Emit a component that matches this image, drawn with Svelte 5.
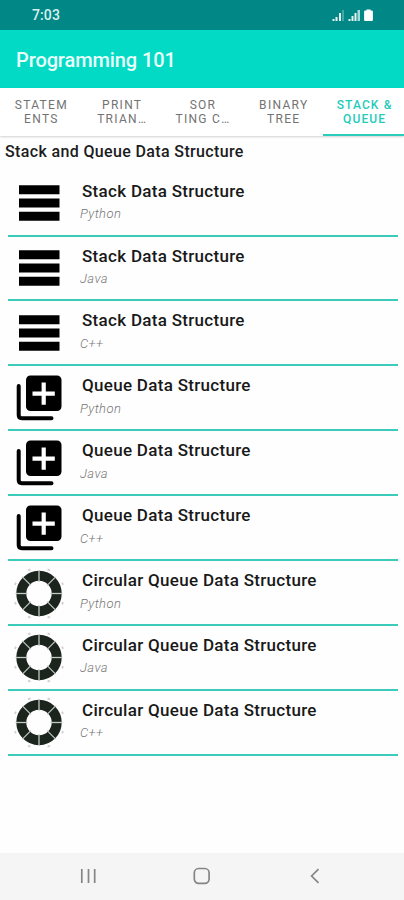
<script lang="ts">
  const tabs = [
    ['STATEM', 'ENTS'],
    ['PRINT', 'TRIAN…'],
    ['SOR', 'TING C…'],
    ['BINARY', 'TREE'],
    ['STACK &', 'QUEUE'],
  ];
  let active = $state(4);

  const languages = ['Python', 'Java', 'C++'];
  const topics = [
    { icon: 'stack', title: 'Stack Data Structure' },
    { icon: 'queue', title: 'Queue Data Structure' },
    { icon: 'circular', title: 'Circular Queue Data Structure' },
  ];
  const items = topics.flatMap((topic) =>
    languages.map((language) => ({ ...topic, language }))
  );

  const spokes = [0, 45, 90, 135, 180, 225, 270, 315];
</script>

<div class="screen">
  <div class="status">
    <span class="time">7:03</span>
    <svg class="indicators" width="42" height="14" viewBox="0 0 42 14">
      <g fill="#e4f5f3">
        <rect x="0.500" y="11" width="2" height="2" />
        <rect x="3.500" y="9" width="2" height="4" />
        <rect x="7" y="5" width="2" height="8" />
        <rect x="10" y="2" width="2" height="11" opacity=".3" />
        <rect x="16.500" y="11" width="2" height="2" />
        <rect x="19.500" y="8" width="2" height="5" />
        <rect x="22.500" y="5" width="2" height="8" />
        <rect x="25.500" y="2" width="2.500" height="11" opacity=".75" />
      </g>
      <path d="M34.500 2.500V1.500h4v1h1.200q1.200 0 1.200 1v8.500q0 1-1 1h-6.800q-1 0-1-1v-8.500q0-1 1.200-1z" fill="#fff" />
    </svg>
  </div>

  <header class="toolbar">Programming 101</header>

  <nav class="tabs">
    {#each tabs as [first, second], i}
      <button class="tab" class:active={i === active} onclick={() => (active = i)}>
        <span>{first}</span>
        <span>{second}</span>
      </button>
    {/each}
  </nav>

  <main>
    <h1>Stack and Queue Data Structure</h1>

    <ul>
      {#each items as item}
        <li>
          <svg class="icon" width="54" height="54" viewBox="0 0 54 54">
            {#if item.icon === 'stack'}
              <path d="M7 9.200h40.500v9H7zM7 22.500h40.500v9H7zM7 35.800h40.500v9H7z" />
            {:else if item.icon === 'queue'}
              <rect x="14" y="4.500" width="35.500" height="35.500" rx="4.500" />
              <path d="M6.700 15v29q0 3.200 3.200 3.200H39.500" fill="none" stroke="#000" stroke-width="4" stroke-linecap="round" />
              <path d="M31.700 11.500v22.300M20.500 22.700h22.300" stroke="#fff" stroke-width="4.200" />
            {:else}
              <circle cx="27" cy="27.500" r="17.700" fill="none" stroke="#1c241e" stroke-width="10" />
              {#each spokes as angle}
                <g transform="rotate({angle} 27 27.5)">
                  <path d="M27 4v12" stroke="#c3c8c3" stroke-width="1.300" />
                  <path d="M25.700 2h2.600" transform="rotate(22.5 27 27.5)" stroke="#cfcfcf" stroke-width="1.800" />
                </g>
              {/each}
            {/if}
          </svg>
          <div class="label">
            <div class="title">{item.title}</div>
            <div class="language">{item.language}</div>
          </div>
        </li>
      {/each}
    </ul>
  </main>

  <footer class="navbar">
    <svg width="18" height="18" viewBox="0 0 18 18">
      <path d="M2.800 2v14M9.500 2v14M15.700 2v14" />
    </svg>
    <svg width="18" height="18" viewBox="0 0 18 18">
      <rect x="1.300" y="1.500" width="14.800" height="14.800" rx="4.300" />
    </svg>
    <svg width="18" height="18" viewBox="0 0 18 18">
      <path d="M12.500 2.200L5.600 9l6.900 6.800" />
    </svg>
  </footer>
</div>

<style>
  :global(body) {
    margin: 0;
  }

  .screen {
    display: flex;
    flex-direction: column;
    height: 900px;
    background-color: #fefefe;
    font-family: Roboto, sans-serif;
    overflow: hidden;
  }

  .status {
    display: flex;
    align-items: center;
    justify-content: space-between;
    box-sizing: border-box;
    height: 30px;
    padding: 0 30px 0 32px;
    background-color: #018786;
    color: #d9f0ee;
  }

  .time {
    font-size: 14px;
    font-weight: 500;
    letter-spacing: 0.1px;
  }

  .toolbar {
    flex: none;
    height: 58px;
    padding-left: 16px;
    background-color: #03dac5;
    color: #e9fffa;
    font-size: 20px;
    font-weight: 500;
    letter-spacing: -0.1px;
    line-height: 60px;
  }

  .tabs {
    flex: none;
    display: flex;
    height: 47.500px;
    background-color: #fff;
    box-shadow: 0 1px 2px rgba(0, 0, 0, 0.18);
  }

  .tab {
    flex: 1 1 0;
    min-width: 0;
    display: flex;
    flex-direction: column;
    align-items: center;
    padding: 10px 0 0 2px;
    border: 0;
    border-bottom: 2px solid transparent;
    background: none;
    color: #737373;
    font-family: inherit;
    font-size: 12px;
    letter-spacing: 1.300px;
    line-height: 14px;
    white-space: nowrap;
  }

  .active {
    border-bottom-color: #2bcdbd;
    color: #1fcbbb;
    font-weight: 500;
    letter-spacing: 1.100px;
  }

  main {
    flex: 1;
  }

  h1 {
    margin: 0;
    padding: 5px 0 0 5px;
    color: #1c1c1c;
    font-size: 16px;
    font-weight: 500;
    letter-spacing: 0.360px;
    line-height: 21px;
  }

  ul {
    margin: 10.200px 6px 0 8px;
    padding: 0;
    list-style: none;
  }

  li {
    display: flex;
    box-sizing: border-box;
    height: 64.900px;
    border-bottom: 2px solid #3bcbbb;
  }

  .icon {
    flex: none;
    margin: 4.500px 0 0 3.500px;
  }

  .label {
    padding: 9px 0 0 14.500px;
  }

  .title {
    padding-left: 2px;
    color: #191919;
    font-size: 17px;
    font-weight: 500;
    letter-spacing: 0.3px;
    line-height: 20px;
  }

  .language {
    padding-top: 4.500px;
    color: #777;
    font-size: 13px;
    font-style: italic;
    font-weight: 300;
    letter-spacing: 0.4px;
    line-height: 18px;
  }

  .navbar {
    flex: none;
    display: flex;
    align-items: center;
    justify-content: space-between;
    box-sizing: border-box;
    height: 47px;
    padding: 0 80px 2px 79px;
    background-color: #f5f5f5;
  }

  .navbar svg {
    fill: none;
    stroke: #858585;
    stroke-width: 1.700;
  }
</style>
